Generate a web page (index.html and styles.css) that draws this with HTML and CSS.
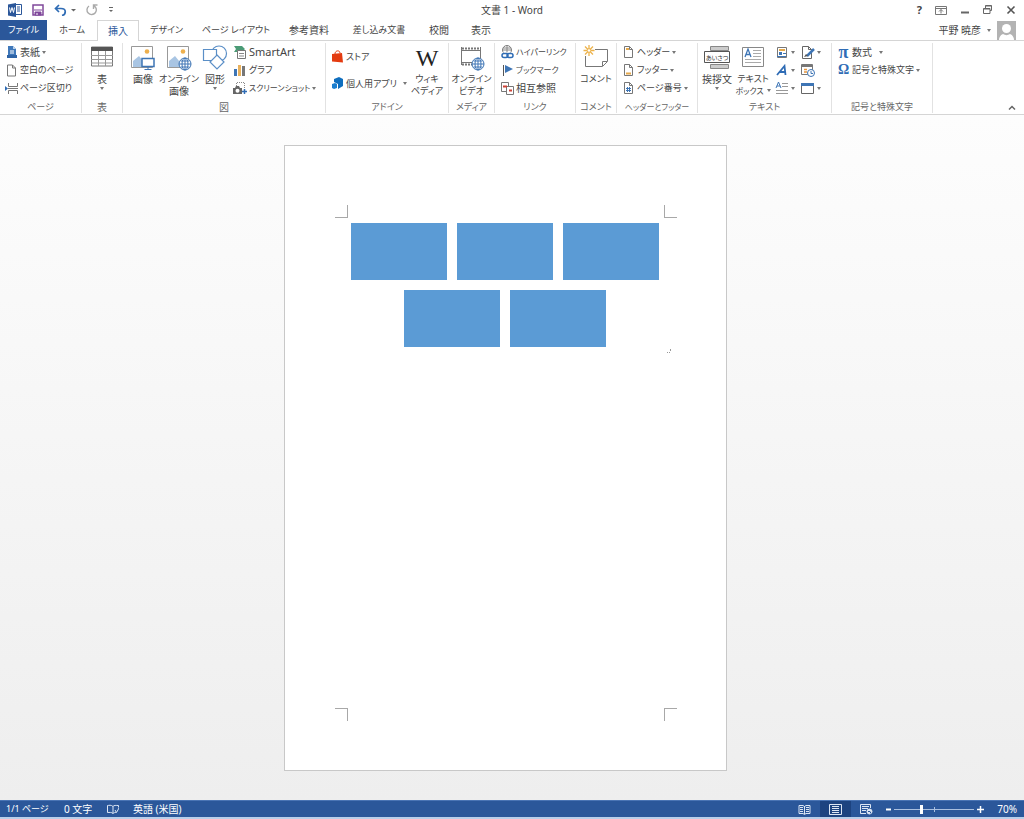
FILE: index.html
```html
<!DOCTYPE html>
<html lang="ja">
<head>
<meta charset="utf-8">
<title>文書 1 - Word</title>
<link rel="stylesheet" href="styles.css">
</head>
<body>
<header class="titlebar">
  <div class="quick">
    <button aria-label="Word"><svg width="14" height="14"><path d="M7.500 1.500h6v10h-6" fill="#fff" stroke="#2b579a"/><path d="M9 4h3M9 6h3M9 8h3" stroke="#2b579a"/><path d="M0 1.500L8 0v14L0 12.500z" fill="#2b579a"/><path d="M1.500 4.500l1 5 1.500-5 1.500 5 1-5" fill="none" stroke="#fff"/></svg></button>
    <button aria-label="上書き保存"><svg width="12" height="12" fill="none" stroke="#80489b"><path d="M1 1h10v10H1z" stroke-width="1.500"/><path d="M2 6h8"/><path d="M3 8h6v3H3z" fill="#80489b"/><path d="M5 9v2" stroke="#fff"/></svg></button>
    <button aria-label="元に戻す"><svg width="22" height="12"><path d="M5 1L1.500 4.500 5 8M2 4.500h5c6 0 5 6 1 7" fill="none" stroke="#2f6cb5" stroke-width="1.700"/><path d="M17 5h5l-2.500 2.500z" fill="#666"/></svg></button>
    <button aria-label="やり直し"><svg width="12" height="12" fill="none" stroke="#aaa" stroke-width="1.400"><path d="M8 1.800A4.700 4.700 0 1 1 3 2M7.500 5V1h4"/></svg></button>
    <button aria-label="クイック アクセス"><svg width="6" height="6"><path d="M1 .5h4" stroke="#666"/><path d="M1 3h4l-2 2z" fill="#666"/></svg></button>
  </div>
  <h1 class="title">文書 1 - Word</h1>
  <div class="window-tools">
    <button class="help" aria-label="ヘルプ">?</button>
    <button aria-label="リボンの表示オプション"><svg width="12" height="10" fill="none" stroke="#777"><path d="M.5 1.500h11v8H.5zM1 3.500h10M6 8.500v-4M4 6.500l2-2 2 2"/></svg></button>
    <button aria-label="最小化"><svg width="10" height="10"><path d="M1 7.500h8" stroke="#666" stroke-width="2"/></svg></button>
    <button aria-label="元のサイズ"><svg width="10" height="10" fill="none" stroke="#666"><path d="M2.500 3V.5h6v5H7M.5 3.500H7v5H.5zM2.500 1h6M.5 4H7"/></svg></button>
    <button aria-label="閉じる"><svg width="10" height="10"><path d="M1.500 1.500l7 7M8.500 1.500l-7 7" stroke="#555" stroke-width="1.600"/></svg></button>
  </div>
</header>

<nav class="tabs">
  <button class="tab file kana">ファイル</button>
  <button class="tab home kana">ホーム</button>
  <button class="tab active">挿入</button>
  <button class="tab design kana">デザイン</button>
  <button class="tab layout kana">ページ レイアウト</button>
  <button class="tab refs">参考資料</button>
  <button class="tab mail kana">差し込み文書</button>
  <button class="tab">校閲</button>
  <button class="tab">表示</button>
  <button class="user"><span>平野 暁彦</span><i class="caret"></i><svg width="19" height="19"><path d="M0 0h19v19H0z" fill="#b3b3b3"/><circle cx="9.500" cy="7.500" r="4.500" fill="#fff"/><path d="M2 19c0-2 1-5 4-6 2 1.500 5 1.500 7 0 3 1 4 4 4 6z" fill="#fff"/></svg></button>
</nav>

<main class="ribbon">
  <section class="group g-page">
    <div class="body">
      <div class="rows">
        <button class="item"><svg width="13" height="13"><path d="M3 0h5l3 3v7H3z" fill="#3f78ba"/><path d="M8 0v3h3" fill="#bcd3ec"/><path d="M5 5h4M5 7h4" stroke="#fff"/><path d="M2 9h10v3H2z" fill="#2f64a6"/></svg><span>表紙</span><i class="caret"></i></button>
        <button class="item"><svg width="13" height="13"><path d="M2.500 1h5L10.500 4v8h-8zM7.500 1v3h3" fill="#fff" stroke="#777"/></svg><span class="kana">空白のページ</span></button>
        <button class="item"><svg width="13" height="13" fill="none" stroke="#777"><path d="M3.500 1v3.500h9V1M3.500 12V8.500h9V12M3 6.500h10"/><path d="M0 4l3 2.500L0 9z" fill="#2f6cb5" stroke="none"/></svg><span class="kana">ページ区切り</span></button>
      </div>
    </div>
    <h2 class="kana">ページ</h2>
  </section>

  <section class="group g-table">
    <div class="body">
      <button class="big"><svg width="24" height="24"><path d="M1.500 2h21v19h-21z" fill="#fff" stroke="#777"/><path d="M1 2h22v4H1z" fill="#555"/><path d="M1 10.500h22M1 14.500h22M1 18h22M8.500 6v15M15.500 6v15" stroke="#999" fill="none"/></svg><span>表</span><i class="caret"></i></button>
    </div>
    <h2>表</h2>
  </section>

  <section class="group g-art">
    <div class="body">
      <button class="big"><svg width="26" height="26"><path d="M1.500 1.500h21v21h-21z" fill="#fff" stroke="#999"/><circle cx="17" cy="6.500" r="2.300" fill="#eeb04d"/><path d="M3 22v-6l6-5 9 11z" fill="#a9c5e3"/><path d="M12 13.500h12v8H12z" fill="#fff" stroke="#3e75b5" stroke-width="1.500"/><path d="M18 22v3M14.500 24.500h7" stroke="#3e75b5"/></svg><span>画像</span></button>
      <button class="big"><svg width="26" height="26"><path d="M1.500 1.500h21v21h-21z" fill="#fff" stroke="#999"/><circle cx="17" cy="6.500" r="2.300" fill="#eeb04d"/><path d="M3 22v-6l6-5 9 11z" fill="#a9c5e3"/><circle cx="19" cy="19" r="6" fill="#fff" stroke="#3e75b5"/><path d="M13 19h12M19 13v12M14.500 16h9M14.500 22h9" stroke="#3e75b5"/><ellipse cx="19" cy="19" rx="3" ry="6" fill="none" stroke="#3e75b5"/></svg><span class="kana">オンライン</span><span>画像</span></button>
      <button class="big"><svg width="26" height="26" fill="#fff" stroke="#5b8fc7" stroke-width="1.200"><circle cx="17" cy="8.500" r="7.500"/><path d="M1.500 4.500h13v11h-13z"/><path d="M15 10l7 7-7 7-7-7z"/></svg><span>図形</span><i class="caret"></i></button>
      <div class="rows">
        <button class="item"><svg width="14" height="14"><path d="M1 1h8l3 3-3 3H1l2-3z" fill="#4b9b76"/><path d="M4.500 5.500h8v8h-8z" fill="#fff" stroke="#777"/><path d="M6 8.500h5M6 11h5" stroke="#888"/></svg><span class="latin">SmartArt</span></button>
        <button class="item"><svg width="14" height="14"><path d="M1 6h3v7H1z" fill="#3e75b5"/><path d="M5 2h3v11H5z" fill="#e9b15c"/><path d="M9 3h3v10H9z" fill="#777"/></svg><span class="kana">グラフ</span></button>
        <button class="item"><svg width="14" height="14"><path d="M3.500 5V1.500h8V7" fill="none" stroke="#888" stroke-dasharray="1 1"/><path d="M0 7h2l1-2h3l1 2h2v6H0z" fill="#666"/><circle cx="4.500" cy="9.800" r="2" fill="#fff"/><path d="M9 10.500h5M11.500 8v5" stroke="#2f6cb5" stroke-width="1.500"/></svg><span class="kana narrow">スクリーンショット</span><i class="caret"></i></button>
      </div>
    </div>
    <h2>図</h2>
  </section>

  <section class="group g-addin">
    <div class="body">
      <div class="rows two">
        <button class="item"><svg width="13" height="13"><path d="M1 4l10-1 1 9.500-11-1z" fill="#e43b10"/><path d="M4 4c0-4 5-4 5-1" fill="none" stroke="#e43b10"/></svg><span class="kana">ストア</span></button>
        <button class="item"><svg width="13" height="13"><path d="M3 2l5-2 4 2v7l-5 3V7L3 5z" fill="#0f6ebe"/><path d="M1 7l3-1 2 1v4l-3 1-2-1z" fill="#1b7ecf"/></svg><span class="kana apps">個人用アプリ</span><i class="caret"></i></button>
      </div>
      <button class="big wiki"><b>W</b><span class="kana">ウィキ</span><span class="kana">ペディア</span></button>
    </div>
    <h2 class="kana">アドイン</h2>
  </section>

  <section class="group g-media">
    <div class="body">
      <button class="big"><svg width="26" height="26" fill="none" stroke="#777"><path d="M2.500 2v18M21.500 2v12M2 5.500h20M2 17.500h11"/><path d="M3 3.500h19M3 19.500h10" stroke-width="2" stroke-dasharray="2 1"/><circle cx="19" cy="19" r="6" fill="#fff" stroke="#3e75b5"/><path d="M13 19h12M19 13v12M14.500 16h9M14.500 22h9" stroke="#3e75b5"/><ellipse cx="19" cy="19" rx="3" ry="6" stroke="#3e75b5"/></svg><span class="kana">オンライン</span><span class="kana">ビデオ</span></button>
    </div>
    <h2 class="kana">メディア</h2>
  </section>

  <section class="group g-link">
    <div class="body">
      <div class="rows">
        <button class="item"><svg width="13" height="14" fill="none"><circle cx="6" cy="5" r="4.500" stroke="#777"/><path d="M1.500 5h9M6 .5v9M2 3h8" stroke="#888"/><path d="M0 7.500h13v6H0z" fill="#fff"/><rect x="1" y="8.500" width="6" height="4" rx="2" stroke="#2f6cb5" stroke-width="1.500"/><rect x="6" y="8.500" width="6" height="4" rx="2" stroke="#2f6cb5" stroke-width="1.500"/></svg><span class="kana narrow">ハイパーリンク</span></button>
        <button class="item"><svg width="13" height="13"><path d="M2.500 1v11" stroke="#555"/><path d="M4 1l8 4-8 4z" fill="#3e75b5"/></svg><span class="kana narrow">ブックマーク</span></button>
        <button class="item"><svg width="13" height="13" fill="#fff" stroke="#777"><path d="M.5.500h7v9h-7z"/><path d="M5.500 4.500h7v8h-7z"/><path d="M2 4.500h4M8 8.500h3" stroke="#d04437" stroke-width="2"/></svg><span>相互参照</span></button>
      </div>
    </div>
    <h2 class="kana">リンク</h2>
  </section>

  <section class="group g-comment">
    <div class="body">
      <button class="big"><svg width="26" height="26"><path d="M2.500 4.500h22v12l-5 5h-17z" fill="#fff" stroke="#777"/><path d="M24 16.500h-4.500V21" fill="none" stroke="#777"/><path d="M0 0h12v11H0z" fill="#fff"/><path d="M6 0v11M.5 5.500h11M2 1.500l8 8M10 1.500l-8 8" stroke="#edb34c" stroke-width="1.300"/><circle cx="6" cy="5.500" r="1.800" fill="#fff" stroke="#edb34c"/></svg><span class="kana">コメント</span></button>
    </div>
    <h2 class="kana">コメント</h2>
  </section>

  <section class="group g-header">
    <div class="body">
      <div class="rows">
        <button class="item"><svg width="12" height="13"><path d="M1.500.500h5l3 3v8h-8zM6.500.500v3h3" fill="#fff" stroke="#777"/><path d="M3 3h3" stroke="#e6a94a" stroke-width="2"/></svg><span class="kana">ヘッダー</span><i class="caret"></i></button>
        <button class="item"><svg width="12" height="13"><path d="M1.500.500h5l3 3v8h-8zM6.500.500v3h3" fill="#fff" stroke="#777"/><path d="M3 9.500h5" stroke="#e6a94a" stroke-width="2"/></svg><span class="kana">フッター</span><i class="caret"></i></button>
        <button class="item"><svg width="12" height="13"><path d="M1.500.500h5l3 3v8h-8zM6.500.500v3h3" fill="#fff" stroke="#777"/><path d="M4.500 5v5M6.500 5v5M3 6.500h5M3 8.500h5" stroke="#3e75b5"/></svg><span class="kana">ページ番号</span><i class="caret"></i></button>
      </div>
    </div>
    <h2 class="kana narrow">ヘッダーとフッター</h2>
  </section>

  <section class="group g-text">
    <div class="body">
      <button class="big"><svg class="greeting" width="26" height="26" fill="#ccc" stroke="#888"><path d="M6.500 1.500h18v4h-18zM6.500 19.500h18v4h-18z"/><path d="M.5 6.500h25v11H.5z" fill="#fff" stroke="#555"/><text x="13" y="15" text-anchor="middle">あいさつ</text></svg><span>挨拶文</span><i class="caret"></i></button>
      <button class="big"><svg width="26" height="26"><path d="M2.500 2.500h21v19h-21z" fill="#fff" stroke="#888"/><path d="M5 12l3-8 3 8M6 9.500h4" fill="none" stroke="#3e75b5" stroke-width="1.300"/><path d="M13 5.500h8M13 8.500h8M13 11.500h8M5 14.500h16M5 17.500h16" stroke="#aaa"/></svg><span class="kana">テキスト</span><span class="kana narrow">ボックス<i class="caret"></i></span></button>
      <div class="mini">
        <button aria-label="クイック パーツ"><svg width="14" height="13"><path d="M2.500 1.500h9v10h-9z" fill="#fff" stroke="#777"/><path d="M4 4h6" stroke="#e6a94a" stroke-width="2"/><path d="M4 6h3v3H4z" fill="#3e75b5"/><path d="M8 7.500h3M2 10.500h9" stroke="#3e75b5"/></svg><i class="caret"></i></button>
        <button aria-label="署名欄"><svg width="14" height="13"><path d="M1.500.5h6l3 3v9h-9zM7.500.5v3h3" fill="#fff" stroke="#666"/><path d="M13 3L6 10" stroke="#3e75b5" stroke-width="2.500"/><path d="M3 11l2-3 2 2z" fill="#555"/></svg><i class="caret"></i></button>
        <button aria-label="ワードアート"><svg width="14" height="13"><path d="M2 11L9.500 2l1 9M4.500 8h6" fill="none" stroke="#2f6cb5" stroke-width="1.800"/></svg><i class="caret"></i></button>
        <button aria-label="日付と時刻"><svg width="14" height="13"><path d="M.5.500h11v10H.5z" fill="#fff" stroke="#777"/><path d="M1 2h10" stroke="#777" stroke-width="2"/><path d="M3 5.500h3M3 8h3" stroke="#e6953d" stroke-width="1.500"/><circle cx="10" cy="9" r="3.500" fill="#fff" stroke="#3e75b5"/><path d="M10 7v2.500h2" fill="none" stroke="#3e75b5"/></svg></button>
        <button aria-label="ドロップ キャップ"><svg width="14" height="13"><path d="M1 6l2.500-6L6 6M2 4h3" fill="none" stroke="#3e75b5"/><path d="M7 1.500h6M7 4.500h6M1 8.500h12M1 11.500h12" stroke="#999"/></svg><i class="caret"></i></button>
        <button aria-label="オブジェクト"><svg width="14" height="13"><path d="M.5 1.500h12v10H.5z" fill="#fff" stroke="#666"/><path d="M0 1h13v3H0z" fill="#3e75b5"/></svg><i class="caret"></i></button>
      </div>
    </div>
    <h2 class="kana">テキスト</h2>
  </section>

  <section class="group g-symbol">
    <div class="body">
      <div class="rows">
        <button class="item"><b class="pi">π</b><span class="formula">数式</span><i class="caret"></i></button>
        <button class="item"><b>Ω</b><span class="symbols">記号と特殊文字</span><i class="caret"></i></button>
      </div>
    </div>
    <h2 class="kana">記号と特殊文字</h2>
  </section>
  <button class="collapse" aria-label="リボンを折りたたむ"><svg width="8" height="6"><path d="M1 4.500l3-3 3 3" fill="none" stroke="#666" stroke-width="1.500"/></svg></button>
</main>

<div class="workspace">
  <article class="sheet">
    <i class="mark bottom right"></i><i></i><i class="mark bottom left"></i>
    <div class="content">
      <div class="blocks"><i></i><i></i><i></i><i></i><i></i></div>
      <svg class="para" width="5" height="4" aria-hidden="true"><path d="M0 3.500h1M2 3.500h1M3.500 2V0" fill="none" stroke="#999"/></svg>
    </div>
    <i class="mark top right"></i><i></i><i class="mark top left"></i>
  </article>
</div>

<footer class="status">
  <button class="st-page kana">1/1 ページ</button>
  <button class="st-words">0 文字</button>
  <button class="st-proof" aria-label="校正"><svg width="12" height="11" fill="none" stroke="#dce6f4"><path d="M6 2.500C4 .5 2 1.500.5 1.500v7c2 0 4-.5 5.500 1V2.500C7 1 9 1.500 11.500 1.500v2M6 9.500c1-1 2-1 3-1"/><path d="M8 6l1.500 2.500L12 4"/></svg></button>
  <button>英語 (米国)</button>
  <div class="views">
    <button aria-label="閲覧モード"><svg width="13" height="11" fill="none" stroke="#dce6f4"><path d="M6.500 2v8M1 1.500h4l1.500 1L8 1.500h4v8H8l-1.500 1-1.500-1H1zM2 3.500h3M2 5.500h3M2 7.500h3M8 3.500h3M8 5.500h3M8 7.500h3"/></svg></button>
    <button class="on" aria-label="印刷レイアウト"><svg width="13" height="11" fill="none" stroke="#dce6f4"><path d="M.5.500h12v10H.5zM3 2.500h7M3 4.500h7M3 6.500h7M3 8.500h7"/></svg></button>
    <button aria-label="Web レイアウト"><svg width="13" height="11" fill="none" stroke="#dce6f4"><path d="M10.500 4V.5H.5v9H6M2 2.500h7M2 4.500h6M2 6.500h4"/><circle cx="9.500" cy="7.500" r="2.500" fill="#dce6f4"/><path d="M8 7.500h2l1 2" stroke="#2b579a"/></svg></button>
  </div>
  <button class="step" aria-label="縮小"><svg width="7" height="7"><path d="M1 3.500h5" stroke="#fff" stroke-width="2"/></svg></button>
  <input class="zoom" type="range" min="10" max="190" value="70" aria-label="ズーム">
  <button class="step" aria-label="拡大"><svg width="7" height="7"><path d="M0 3.500h7M3.500 0v7" stroke="#fff" stroke-width="1.500"/></svg></button>
  <button class="percent">70%</button>
</footer>
</body>
</html>
```
FILE: styles.css
```css
* { box-sizing: border-box; }
body {
  margin: 0;
  height: 100vh;
  display: flex;
  flex-direction: column;
  background: #fff;
  color: #444;
  font: 10px/12px "Noto Sans", "Noto Sans CJK JP", sans-serif;
  font-feature-settings: "palt";
  white-space: nowrap;
}
button {
  display: flex;
  align-items: center;
  padding: 0;
  border: 0;
  background: none;
  color: inherit;
  font: inherit;
  font-feature-settings: inherit;
  white-space: nowrap;
}
svg { display: block; flex: none; }
h1, h2 { margin: 0; font-size: 10px; font-weight: 400; }
.kana, h2.kana { font-size: 9px; }
.narrow, h2.narrow { font-size: 8px; }
.latin { font-size: 11px; }
.caret {
  flex: none;
  display: inline-block;
  border: 2px solid transparent;
  border-top: 3px solid #777;
  border-bottom: 0;
}

.titlebar {
  display: grid;
  grid-template-columns: 1fr auto 1fr;
  align-items: center;
  height: 20px;
}
.quick { display: flex; align-items: center; gap: 10px; padding-left: 8px; }
.title { font-size: 10px; line-height: 20px; }
.window-tools { display: flex; justify-content: flex-end; align-items: center; gap: 13px; padding-right: 8px; }
.help { font-size: 11px; font-weight: 700; }

.tabs { display: flex; height: 20px; }
.tab { width: 42px; justify-content: center; }
.tab.file { width: 47px; background: #2b579a; color: #fff; }
.tab.home { width: 50px; }
.tab.design { width: 55px; }
.tab.layout { width: 84px; }
.tab.refs { width: 62px; }
.tab.mail { width: 78px; }
.tab.active {
  height: 21px;
  z-index: 1;
  border: 1px solid #d5d5d5;
  border-bottom: 0;
  background: #fff;
  color: #2b579a;
}
.user { gap: 6px; margin-left: auto; padding-right: 8px; }

.ribbon {
  display: flex;
  border-top: 1px solid #d5d5d5;
  border-bottom: 1px solid #d5d5d5;
  padding: 2px 0 1px;
}
.group { display: flex; flex-direction: column; flex: none; border-right: 1px solid #e2e2e2; }
.group h2 { height: 16px; line-height: 20px; text-align: center; color: #666; }
.body { display: flex; height: 54px; }
.g-page { width: 82px; }
.g-page .body { padding-left: 5px; }
.g-table, .g-comment { width: 41px; }
.g-art { width: 203px; }
.g-art .body { padding-left: 2px; }
.g-addin { width: 123px; }
.g-addin .body { padding-left: 5px; }
.g-media { width: 46px; }
.g-link, .g-header { width: 81px; }
.g-link .body, .g-header .body { padding-left: 6px; }
.g-text { width: 134px; }
.g-text .body { padding-left: 1px; }
.g-symbol { width: 101px; }
.g-symbol .body { padding-left: 5px; }
.g-table .body, .g-comment .body, .g-media .body { justify-content: center; }

.rows { display: flex; flex-direction: column; }
.rows.two { justify-content: space-around; }
.item { height: 18px; gap: 2px; }
.item b { width: 13px; color: #2f6cb5; font: 700 14px/18px "Liberation Serif", serif; }
.item .pi { font-size: 18px; }
.rows.two .item { width: 76px; }
.apps { flex: 1; text-align: left; }
.formula { padding-right: 5px; }
.symbols { font-size: 9px; }
.big { flex-direction: column; width: 36px; padding-top: 2px; }
.big svg, .wiki b { height: 26px; margin-bottom: 2px; }
.big .caret { margin-top: 2px; }
.big span .caret { margin: 0 0 2px 3px; }
.wiki { width: 40px; }
.wiki b { color: #222; font: 400 24px/26px "Liberation Serif", serif; }
.greeting text { fill: #333; stroke: none; font-size: 6px; }
.mini {
  display: grid;
  grid-template-columns: 26px 26px;
  grid-template-rows: repeat(3, 18px);
  padding-left: 4px;
}
.mini button { gap: 2px; }
.collapse { margin: auto 8px 2px auto; }

.workspace {
  flex: 1;
  min-height: 0;
  display: flex;
  justify-content: center;
  padding: 30px 13px 29px 0;
  background: linear-gradient(#fdfdfd, #eee);
}
.sheet {
  display: grid;
  grid-template-columns: 13px 1fr 13px;
  grid-template-rows: 13px 1fr 13px;
  height: 100%;
  aspect-ratio: 443 / 626;
  padding: 59px 49px 49px 50px;
  border: 1px solid #c8c8c8;
  background: #fff;
}
.mark { border: 0 solid #a8a8a8; }
.mark.bottom { border-bottom-width: 1px; }
.mark.top { border-top-width: 1px; }
.mark.right { border-right-width: 1px; }
.mark.left { border-left-width: 1px; }
.content { grid-column: 1 / -1; padding: 5px 5px 0 13px; }
.blocks { display: flex; flex-wrap: wrap; justify-content: center; gap: 10px; padding: 0 10px 2px 0; }
.blocks i { width: 96px; height: 57px; background: #5b9bd5; }
.para { margin-left: auto; }

.status {
  display: flex;
  height: 19px;
  padding-left: 6px;
  border-top: 1px solid #4a74b4;
  border-bottom: 2px solid #b9cfea;
  background: #2b579a;
  color: #fff;
}
.st-page { width: 58px; }
.st-words { width: 43px; }
.st-proof { width: 26px; }
.views { display: flex; margin-left: auto; }
.views button { width: 31px; justify-content: center; }
.views .on { background: #1d4380; }
.step { margin-left: 3px; }
.zoom {
  appearance: none;
  width: 80px;
  height: 16px;
  margin: 0 0 0 2px;
  background: linear-gradient(#a9bfdf, #a9bfdf) center / 1px 5px no-repeat,
    linear-gradient(#a9bfdf, #a9bfdf) center / 100% 1px no-repeat;
}
.zoom::-webkit-slider-thumb { appearance: none; width: 3px; height: 9px; background: #fff; }
.percent { justify-content: flex-end; width: 33px; margin-right: 7px; }
```
